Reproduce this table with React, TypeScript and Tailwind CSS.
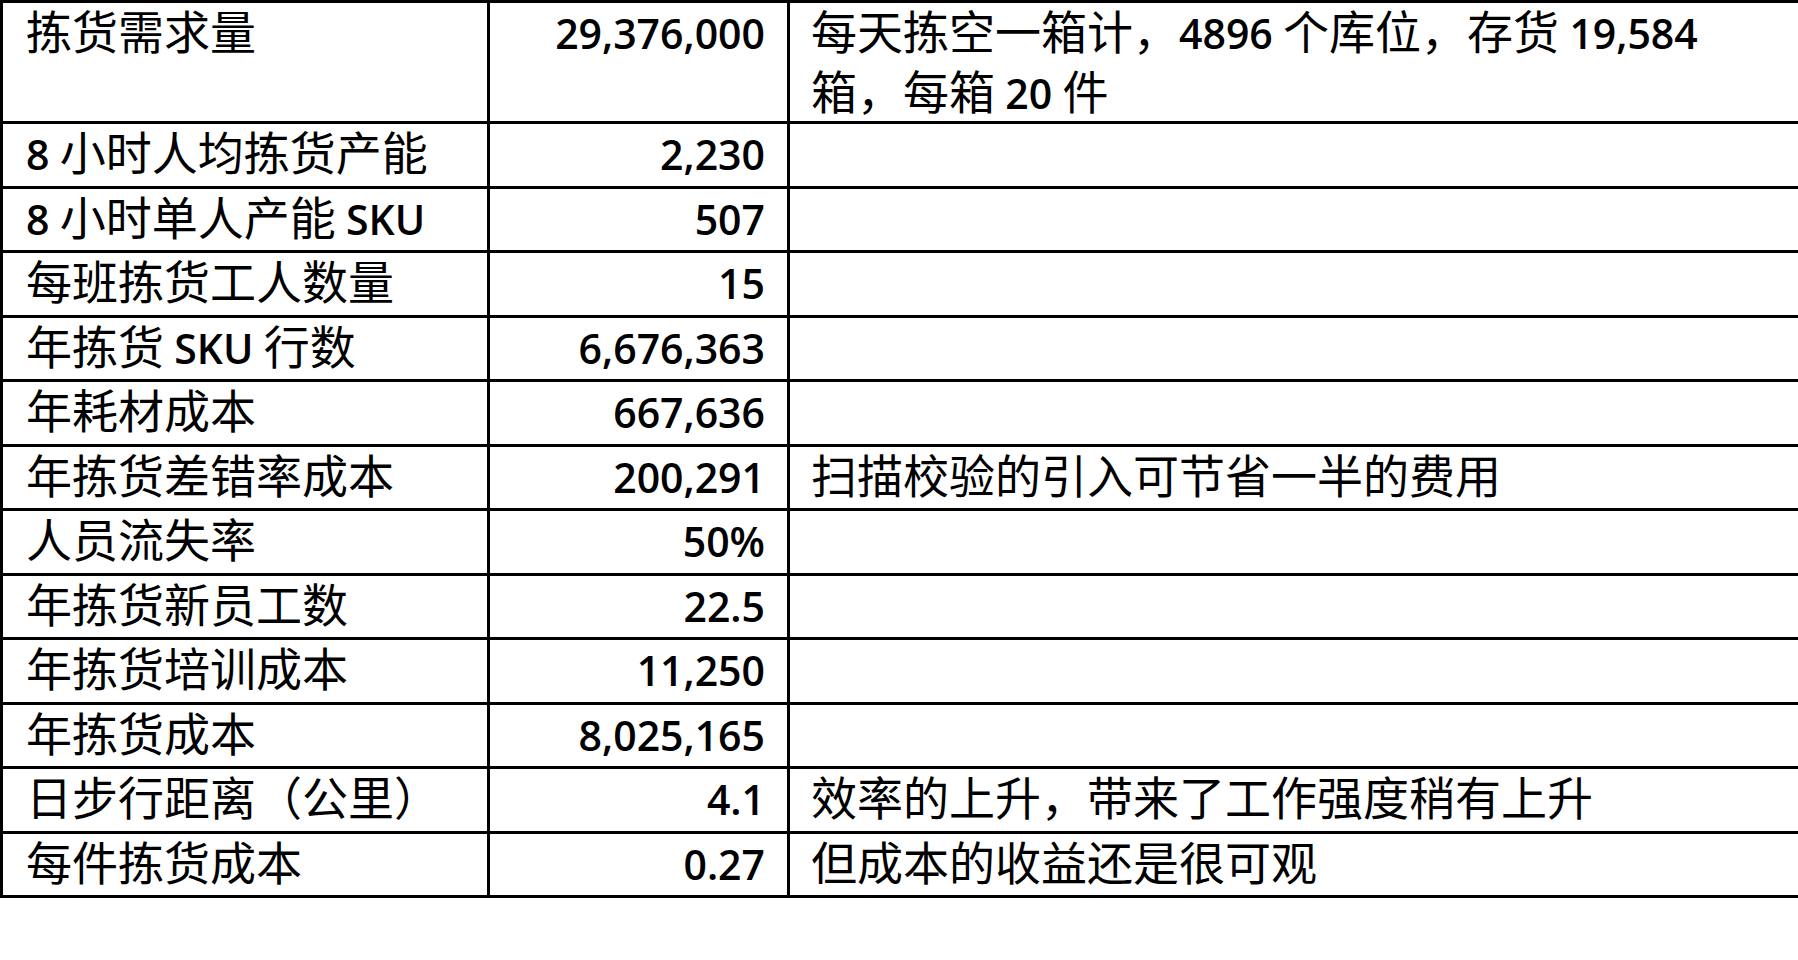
const rows: [string, string, string][] = [
  ["拣货需求量", "29,376,000", "每天拣空一箱计，4896 个库位，存货 19,584\n箱，每箱 20 件"],
  ["8 小时人均拣货产能", "2,230", ""],
  ["8 小时单人产能 SKU", "507", ""],
  ["每班拣货工人数量", "15", ""],
  ["年拣货 SKU 行数", "6,676,363", ""],
  ["年耗材成本", "667,636", ""],
  ["年拣货差错率成本", "200,291", "扫描校验的引入可节省一半的费用"],
  ["人员流失率", "50%", ""],
  ["年拣货新员工数", "22.5", ""],
  ["年拣货培训成本", "11,250", ""],
  ["年拣货成本", "8,025,165", ""],
  ["日步行距离（公里）", "4.1", "效率的上升，带来了工作强度稍有上升"],
  ["每件拣货成本", "0.27", "但成本的收益还是很可观"],
]

// latin runs get a narrower humanist face, like the Calibri in the source sheet
function Mixed({ text }: { text: string }) {
  const lines = text.split("\n")
  return (
    <>
      {lines.map((line, i) => (
        <div key={i} className="h-[60px] whitespace-nowrap leading-[52px]">
          {line.split(/([0-9A-Za-z.,%]+)/).map((part, j) =>
            /^[0-9A-Za-z.,%]+$/.test(part) ? (
              <span key={j} className="font-['Open_Sans','Noto_Sans_CJK_SC',sans-serif] text-[41px] font-semibold">
                {part}
              </span>
            ) : (
              <span key={j}>{part}</span>
            )
          )}
        </div>
      ))}
    </>
  )
}

export default function App() {
  return (
    <div className="min-h-screen w-full overflow-hidden bg-white text-black">
      <div className="w-[1860px] border-l-[3px] border-t-[3px] border-black font-['Noto_Sans_CJK_SC',sans-serif] text-[46px]">
        {rows.map(([name, value, note], i) => (
          <div
            key={name}
            className={`flex border-b-[3px] border-black ${i === 0 ? "h-[121px]" : "h-[64.5px]"}`}
          >
            <div className="w-[487px] shrink-0 border-r-[3px] border-black pl-[23px]">
              <Mixed text={name} />
            </div>
            <div className="w-[300px] shrink-0 border-r-[3px] border-black pr-[22px] text-right">
              <Mixed text={value} />
            </div>
            <div className="flex-1 pl-[21px]">{note && <Mixed text={note} />}</div>
          </div>
        ))}
      </div>
    </div>
  )
}
